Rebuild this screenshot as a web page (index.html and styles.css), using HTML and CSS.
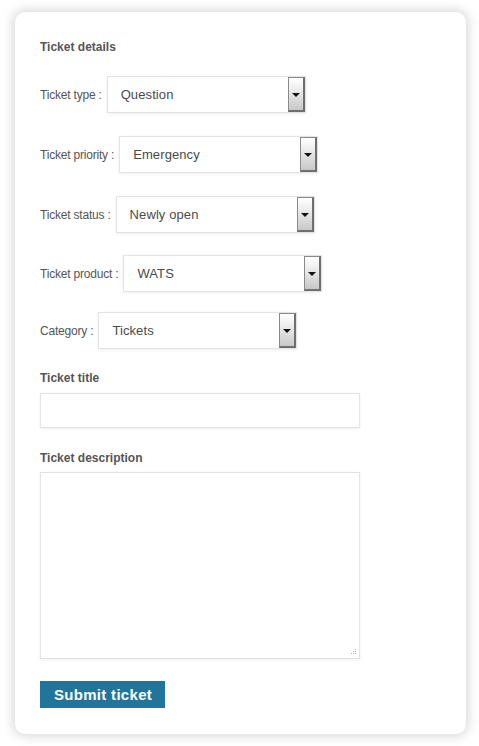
FILE: index.html
```html
<!DOCTYPE html>
<html lang="en">
<head>
<meta charset="utf-8">
<title>Ticket details</title>
<link rel="stylesheet" href="styles.css">
</head>
<body>
<form class="card">
  <h3 class="section-title">Ticket details</h3>

  <div class="field-row">
    <label class="inline-label">Ticket type :</label>
    <div class="select">
      <select><option>Question</option></select>
      <span class="select-btn"><span class="caret"></span></span>
    </div>
  </div>

  <div class="field-row">
    <label class="inline-label">Ticket priority :</label>
    <div class="select">
      <select><option>Emergency</option></select>
      <span class="select-btn"><span class="caret"></span></span>
    </div>
  </div>

  <div class="field-row">
    <label class="inline-label">Ticket status :</label>
    <div class="select">
      <select><option>Newly open</option></select>
      <span class="select-btn"><span class="caret"></span></span>
    </div>
  </div>

  <div class="field-row row-snug">
    <label class="inline-label">Ticket product :</label>
    <div class="select">
      <select><option>WATS</option></select>
      <span class="select-btn"><span class="caret"></span></span>
    </div>
  </div>

  <div class="field-row row-tight">
    <label class="inline-label">Category :</label>
    <div class="select">
      <select><option>Tickets</option></select>
      <span class="select-btn"><span class="caret"></span></span>
    </div>
  </div>

  <label class="block-label">Ticket title</label>
  <input class="text-input" type="text">

  <label class="block-label">Ticket description</label>
  <div class="textarea-wrap">
    <textarea class="textarea"></textarea>
    <svg class="grip" width="7" height="7" viewBox="0 0 7 7">
      <rect x="5" y="0" width="1" height="1" fill="#aaa"/>
      <rect x="3" y="2" width="1" height="1" fill="#aaa"/>
      <rect x="5" y="2" width="1" height="1" fill="#aaa"/>
      <rect x="1" y="4" width="1" height="1" fill="#aaa"/>
      <rect x="3" y="4" width="1" height="1" fill="#aaa"/>
      <rect x="5" y="4" width="1" height="1" fill="#aaa"/>
    </svg>
  </div>

  <button class="submit" type="button">Submit ticket</button>
</form>
</body>
</html>
```

FILE: styles.css
```css
* { box-sizing: border-box; }

html, body {
  margin: 0;
  padding: 0;
  background: #ffffff;
}

body {
  padding: 12px 13px 12px 15px;
  font-family: "Liberation Sans", Arial, sans-serif;
  color: #555;
}

.card {
  width: 451px;
  height: 722px;
  background: #fff;
  border-radius: 10px;
  box-shadow: 0 0 12px 2px rgba(0, 0, 0, 0.16);
  padding: 28px 25px 0 25px;
  display: flex;
  flex-direction: column;
  align-items: flex-start;
}

.section-title {
  margin: 0;
  font-size: 12px;
  line-height: 14px;
  font-weight: bold;
  color: #555;
}

.field-row {
  display: flex;
  align-items: center;
  margin-top: 23px;
}
.section-title + .field-row { margin-top: 22px; }
.field-row.row-snug { margin-top: 22px; }
.field-row.row-tight { margin-top: 20px; }

.inline-label {
  font-size: 12px;
  letter-spacing: -0.2px;
  color: #555;
  margin-right: 5px;
  white-space: nowrap;
}

.select {
  width: 199px;
  height: 37px;
  border: 1px solid #e3e3e3;
  box-shadow: 0 1px 3px rgba(0, 0, 0, 0.07);
  background: #fff;
  display: flex;
  align-items: stretch;
}

.select select {
  -webkit-appearance: none;
  appearance: none;
  flex: 1;
  min-width: 0;
  border: 0;
  background: transparent;
  font-family: "Liberation Sans", Arial, sans-serif;
  font-size: 13px;
  letter-spacing: 0.1px;
  color: #4a4a4a;
  padding: 0 0 0 13px;
  outline: none;
}

.select-btn {
  width: 17px;
  border-style: solid;
  border-width: 1px 2px 2px 1px;
  border-color: #8a8a8a #6f6f6f #6f6f6f #8a8a8a;
  background: linear-gradient(#ffffff, #f0f0f0 30%, #c8c8c8);
  display: flex;
  align-items: center;
  justify-content: center;
}

.caret {
  width: 0;
  height: 0;
  border-left: 4px solid transparent;
  border-right: 4px solid transparent;
  border-top: 4px solid #111;
  margin-top: 1px;
}

.block-label {
  display: block;
  margin-top: 22px;
  font-size: 12px;
  line-height: 14px;
  font-weight: bold;
  color: #555;
}

.text-input {
  display: block;
  width: 320px;
  height: 35px;
  margin: 8px 0 0 0;
  border: 1px solid #e3e3e3;
  box-shadow: 0 1px 3px rgba(0, 0, 0, 0.07);
  background: #fff;
  outline: none;
}
.text-input + .block-label { margin-top: 23px; }

.textarea-wrap {
  position: relative;
  width: 320px;
  height: 187px;
  margin-top: 7px;
}

.textarea {
  display: block;
  width: 100%;
  height: 100%;
  margin: 0;
  border: 1px solid #e3e3e3;
  box-shadow: 0 1px 3px rgba(0, 0, 0, 0.07);
  background: #fff;
  resize: none;
  outline: none;
}

.grip {
  position: absolute;
  right: 3px;
  bottom: 3px;
}

.submit {
  margin-top: 22px;
  height: 27px;
  padding: 0 13px 0 14px;
  border: 0;
  border-radius: 0;
  background: #21759b;
  color: #fff;
  font-family: "Liberation Sans", Arial, sans-serif;
  font-size: 15px;
  letter-spacing: 0.3px;
  font-weight: bold;
  line-height: 27px;
  cursor: pointer;
}
```
